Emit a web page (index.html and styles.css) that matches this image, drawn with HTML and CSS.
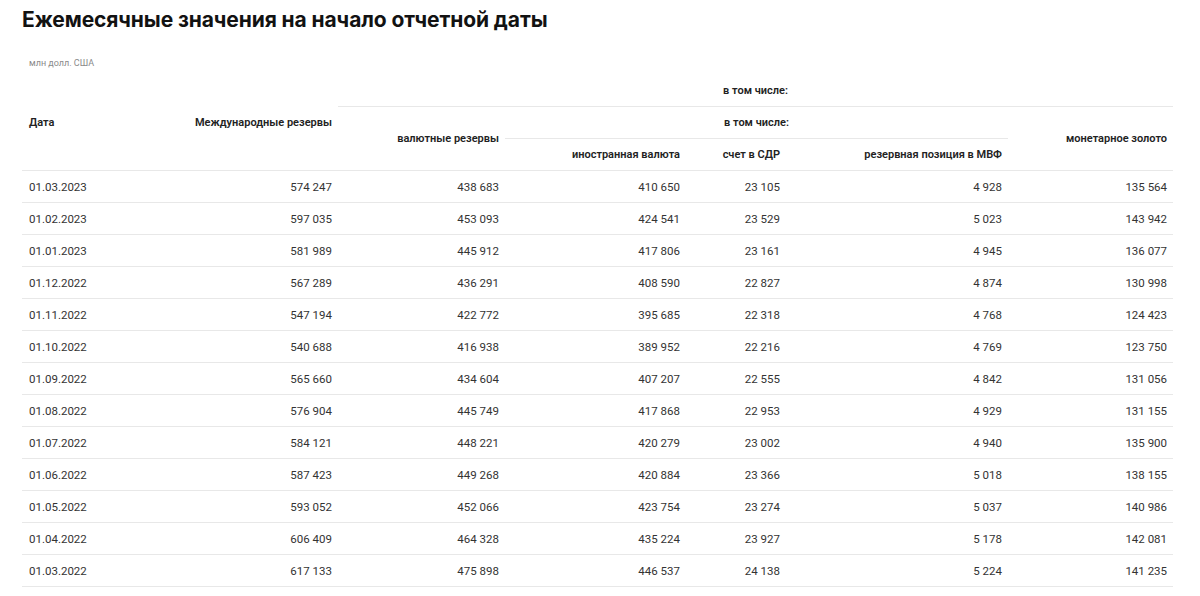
FILE: index.html
```html
<!DOCTYPE html>
<html lang="ru">
<head>
<meta charset="utf-8">
<title>Ежемесячные значения на начало отчетной даты</title>
<link rel="stylesheet" href="styles.css">
</head>
<body>
<div class="page">
  <h1 class="title">Ежемесячные значения на начало отчетной даты</h1>
  <div class="units">млн долл. США</div>
  <table class="data">
    <colgroup>
      <col class="c1"><col class="c2"><col class="c3"><col class="c4"><col class="c5"><col class="c6"><col class="c7">
    </colgroup>
    <thead>
      <tr>
        <th rowspan="3" class="left line">Дата</th>
        <th rowspan="3" class="line">Международные резервы</th>
        <th colspan="5" class="center line">в том числе:</th>
      </tr>
      <tr>
        <th rowspan="2" class="line">валютные резервы</th>
        <th colspan="3" class="center line">в том числе:</th>
        <th rowspan="2" class="line">монетарное золото</th>
      </tr>
      <tr>
        <th class="line">иностранная валюта</th>
        <th class="line">счет в СДР</th>
        <th class="line">резервная позиция в МВФ</th>
      </tr>
    </thead>
    <tbody>
      <tr><td class="left">01.03.2023</td><td>574 247</td><td>438 683</td><td>410 650</td><td>23 105</td><td>4 928</td><td>135 564</td></tr>
      <tr><td class="left">01.02.2023</td><td>597 035</td><td>453 093</td><td>424 541</td><td>23 529</td><td>5 023</td><td>143 942</td></tr>
      <tr><td class="left">01.01.2023</td><td>581 989</td><td>445 912</td><td>417 806</td><td>23 161</td><td>4 945</td><td>136 077</td></tr>
      <tr><td class="left">01.12.2022</td><td>567 289</td><td>436 291</td><td>408 590</td><td>22 827</td><td>4 874</td><td>130 998</td></tr>
      <tr><td class="left">01.11.2022</td><td>547 194</td><td>422 772</td><td>395 685</td><td>22 318</td><td>4 768</td><td>124 423</td></tr>
      <tr><td class="left">01.10.2022</td><td>540 688</td><td>416 938</td><td>389 952</td><td>22 216</td><td>4 769</td><td>123 750</td></tr>
      <tr><td class="left">01.09.2022</td><td>565 660</td><td>434 604</td><td>407 207</td><td>22 555</td><td>4 842</td><td>131 056</td></tr>
      <tr><td class="left">01.08.2022</td><td>576 904</td><td>445 749</td><td>417 868</td><td>22 953</td><td>4 929</td><td>131 155</td></tr>
      <tr><td class="left">01.07.2022</td><td>584 121</td><td>448 221</td><td>420 279</td><td>23 002</td><td>4 940</td><td>135 900</td></tr>
      <tr><td class="left">01.06.2022</td><td>587 423</td><td>449 268</td><td>420 884</td><td>23 366</td><td>5 018</td><td>138 155</td></tr>
      <tr><td class="left">01.05.2022</td><td>593 052</td><td>452 066</td><td>423 754</td><td>23 274</td><td>5 037</td><td>140 986</td></tr>
      <tr><td class="left">01.04.2022</td><td>606 409</td><td>464 328</td><td>435 224</td><td>23 927</td><td>5 178</td><td>142 081</td></tr>
      <tr><td class="left">01.03.2022</td><td>617 133</td><td>475 898</td><td>446 537</td><td>24 138</td><td>5 224</td><td>141 235</td></tr>
    </tbody>
  </table>
</div>
</body>
</html>
```

FILE: styles.css
```css
html, body {
  margin: 0;
  padding: 0;
  background: #ffffff;
}

.page {
  padding: 0 27px 0 22px;
  font-family: Roboto, "Liberation Sans", Arial, sans-serif;
  color: #333333;
}

.title {
  margin: 0;
  padding-top: 6px;
  font-family: Inter, Roboto, "Liberation Sans", sans-serif;
  font-size: 21px;
  font-weight: 700;
  line-height: 28px;
  color: #121212;
  letter-spacing: -0.1px;
}

.units {
  margin-top: 24px;
  padding-left: 7px;
  font-size: 9px;
  line-height: 11px;
  color: #8a8a8a;
}

.data {
  margin-top: 6px;
  width: 1151px;
  border-collapse: collapse;
  table-layout: fixed;
}

.c1 { width: 160px; }
.c2 { width: 156px; }
.c3 { width: 167px; }
.c4 { width: 181px; }
.c5 { width: 100px; }
.c6 { width: 222px; }
.c7 { width: 165px; }

.data th,
.data td {
  padding: 0 6px;
  text-align: right;
  white-space: nowrap;
  vertical-align: middle;
}

.data th {
  height: 31px;
  font-size: 11px;
  font-weight: 600;
  color: #222222;
}

.data td {
  height: 31px;
  font-size: 11.5px;
  font-weight: 400;
  color: #333333;
  border-bottom: 1px solid #e8e8e8;
}

.data .line {
  border-bottom: 1px solid #e8e8e8;
}

.data .left {
  text-align: left;
  padding-left: 7px;
}

.data .center {
  text-align: center;
}
```
